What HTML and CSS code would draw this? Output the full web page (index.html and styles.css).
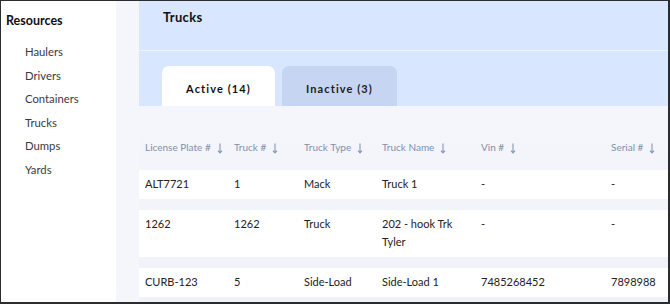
FILE: index.html
```html
<!DOCTYPE html>
<html>
<head>
<meta charset="utf-8">
<link rel="stylesheet" href="styles.css">
</head>
<body>
<div class="frame">
  <aside class="sidebar">
    <div class="side-title">Resources</div>
    <ul class="side-list">
      <li>Haulers</li>
      <li>Drivers</li>
      <li>Containers</li>
      <li>Trucks</li>
      <li>Dumps</li>
      <li>Yards</li>
    </ul>
  </aside>
  <div class="gutter"></div>
  <main class="main">
    <div class="title-bar">Trucks</div>
    <div class="tab-bar">
      <div class="tab tab-active">Active (14)</div>
      <div class="tab tab-inactive">Inactive (3)</div>
    </div>
    <div class="table">
      <div class="row head">
        <div class="cell">License Plate #<svg class="arrow" width="6" height="11" viewBox="0 0 6 11"><path d="M3 0.5V10M1 7.6L3 10L5 7.6" fill="none" stroke="currentColor" stroke-width="1.1"/></svg></div>
        <div class="cell">Truck #<svg class="arrow" width="6" height="11" viewBox="0 0 6 11"><path d="M3 0.5V10M1 7.6L3 10L5 7.6" fill="none" stroke="currentColor" stroke-width="1.1"/></svg></div>
        <div class="cell">Truck Type<svg class="arrow" width="6" height="11" viewBox="0 0 6 11"><path d="M3 0.5V10M1 7.6L3 10L5 7.6" fill="none" stroke="currentColor" stroke-width="1.1"/></svg></div>
        <div class="cell">Truck Name<svg class="arrow" width="6" height="11" viewBox="0 0 6 11"><path d="M3 0.5V10M1 7.6L3 10L5 7.6" fill="none" stroke="currentColor" stroke-width="1.1"/></svg></div>
        <div class="cell">Vin #<svg class="arrow" width="6" height="11" viewBox="0 0 6 11"><path d="M3 0.5V10M1 7.6L3 10L5 7.6" fill="none" stroke="currentColor" stroke-width="1.1"/></svg></div>
        <div class="cell">Serial #<svg class="arrow" width="6" height="11" viewBox="0 0 6 11"><path d="M3 0.5V10M1 7.6L3 10L5 7.6" fill="none" stroke="currentColor" stroke-width="1.1"/></svg></div>
      </div>
      <div class="row body">
        <div class="cell">ALT7721</div>
        <div class="cell">1</div>
        <div class="cell">Mack</div>
        <div class="cell">Truck 1</div>
        <div class="cell">-</div>
        <div class="cell">-</div>
      </div>
      <div class="row body">
        <div class="cell">1262</div>
        <div class="cell">1262</div>
        <div class="cell">Truck</div>
        <div class="cell">202 - hook Trk Tyler</div>
        <div class="cell">-</div>
        <div class="cell">-</div>
      </div>
      <div class="row body">
        <div class="cell">CURB-123</div>
        <div class="cell">5</div>
        <div class="cell">Side-Load</div>
        <div class="cell">Side-Load 1</div>
        <div class="cell">7485268452</div>
        <div class="cell">7898988</div>
      </div>
    </div>
  </main>
</div>
</body>
</html>
```

FILE: styles.css
```css
* { box-sizing: border-box; }
html, body { margin: 0; padding: 0; }
body {
  font-family: Lato, "Noto Sans", "DejaVu Sans", sans-serif;
  color: #222;
  background: #fff;
}
.frame {
  width: 670px;
  height: 304px;
  border-style: solid;
  border-color: #2c2c2f;
  border-width: 1px 2px 2px 1px;
  display: flex;
  overflow: hidden;
}
.sidebar {
  width: 115px;
  flex: none;
  background: #fff;
  padding-top: 11px;
}
.side-title {
  font-weight: 700;
  font-size: 12.5px;
  line-height: 18px;
  padding-left: 5px;
  color: #111;
}
.side-list {
  list-style: none;
  margin: 10px 0 0;
  padding: 0 0 0 24px;
}
.side-list li {
  font-size: 11.3px;
  line-height: 23.5px;
  height: 23.5px;
  color: #3a3a3d;
}
.gutter {
  width: 23px;
  flex: none;
  background: #f4f6fb;
}
.main {
  flex: 1;
  min-width: 0;
  background: #eff2f8;
  overflow: hidden;
}
.title-bar {
  height: 50px;
  background: #d9e6ff;
  border-bottom: 1px solid #eef3fd;
  padding: 7px 0 0 24px;
  font-weight: 700;
  font-size: 13px;
  line-height: 18px;
  letter-spacing: 0.3px;
  color: #111;
}
.tab-bar {
  background: #d9e6ff;
  padding: 15px 0 0 23px;
  display: flex;
  gap: 7px;
}
.tab {
  height: 40px;
  border-radius: 7px 7px 0 0;
  padding-top: 15px;
  font-weight: 700;
  font-size: 11px;
  line-height: 16px;
  letter-spacing: 1.1px;
  text-align: center;
  color: #111;
}
.tab-active { width: 113px; background: #fff; }
.tab-inactive { width: 115px; background: #c5d5f2; color: #1c1c22; }
.table {
  width: 600px;
  background: linear-gradient(#f4f6fb, #eff2f8);
}
.row {
  display: grid;
  grid-template-columns: 89px 70px 78px 99px 130px 134px;
}
.cell { padding-left: 6px; }
.head {
  padding: 33px 0 15px;
  font-size: 10px;
  line-height: 16px;
  color: #7f90ae;
}
.head .cell { display: flex; align-items: center; }
.arrow { margin-left: 6px; margin-top: 2px; color: #8797b3; }
.body {
  background: #fff;
  padding: 5px 0 6px;
  margin-bottom: 11px;
  font-size: 11px;
  line-height: 18px;
  color: #222;
}
.body .cell { padding-right: 10px; }
```
